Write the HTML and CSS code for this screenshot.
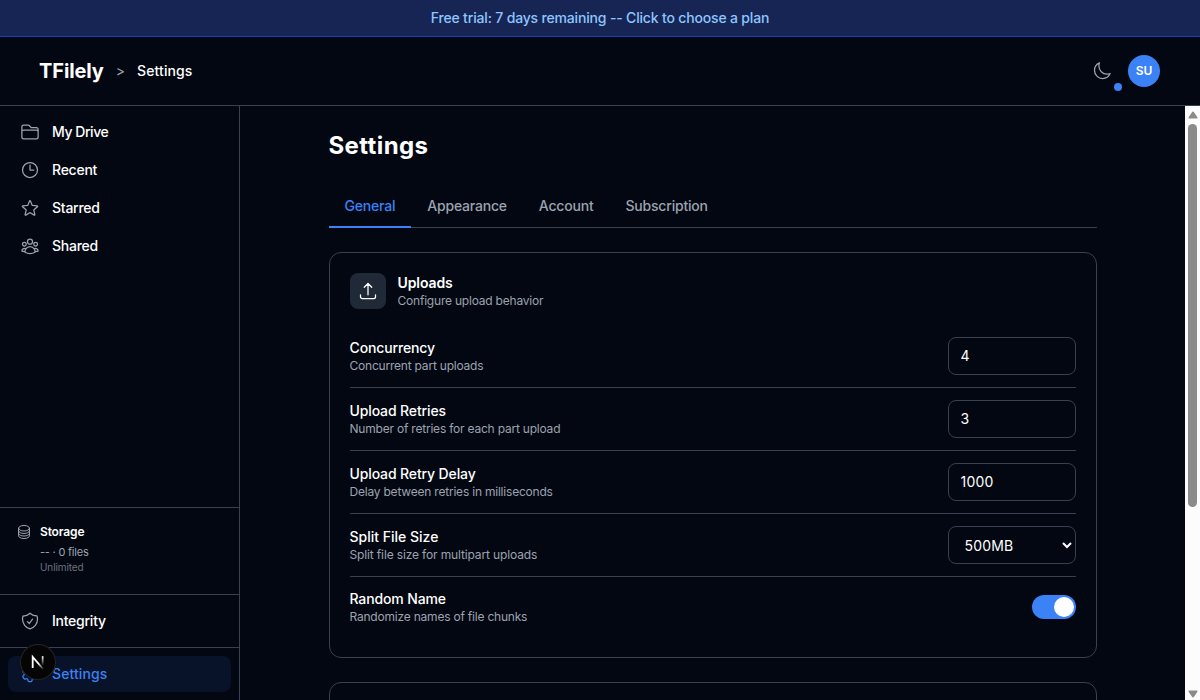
FILE: index.html
```html
<!DOCTYPE html>
<html lang="en">
<head>
  <meta charset="UTF-8">
  <meta name="viewport" content="width=device-width, initial-scale=1.0">
  <title>Settings - TFilely</title>
  <link rel="stylesheet" href="styles.css">
</head>
<body>

  <a class="trial-banner" href="#">Free trial: 7 days remaining -- Click to choose a plan</a>

  <header class="header">
    <div class="breadcrumb">
      <span class="brand">TFilely</span>
      <span class="separator">&gt;</span>
      <span class="current">Settings</span>
    </div>
    <div class="header-actions">
      <button class="theme-button" aria-label="Theme">
        <svg class="icon" viewBox="0 0 24 24"><path d="M21.752 15.002A9.72 9.72 0 0 1 18 15.75c-5.385 0-9.75-4.365-9.75-9.75 0-1.33.266-2.597.748-3.752A9.753 9.753 0 0 0 3 11.25C3 16.635 7.365 21 12.75 21a9.753 9.753 0 0 0 9.002-5.998Z"/></svg>
        <span class="theme-dot"></span>
      </button>
      <div class="avatar">SU</div>
    </div>
  </header>

  <div class="layout">
    <aside class="sidebar">
      <nav class="nav nav-main">
        <a class="nav-item" href="#">
          <svg class="icon" viewBox="0 0 24 24"><path d="M2.25 12.75V12A2.25 2.25 0 0 1 4.5 9.75h15A2.25 2.25 0 0 1 21.75 12v.75m-8.69-6.44-2.12-2.12a1.5 1.5 0 0 0-1.061-.44H4.5A2.25 2.25 0 0 0 2.25 6v12a2.25 2.25 0 0 0 2.25 2.25h15A2.25 2.25 0 0 0 21.75 18V9a2.25 2.25 0 0 0-2.25-2.25h-5.379a1.5 1.5 0 0 1-1.06-.44Z"/></svg>
          <span class="tight">My Drive</span>
        </a>
        <a class="nav-item" href="#">
          <svg class="icon" viewBox="0 0 24 24"><path d="M12 6v6h4.5m4.5 0a9 9 0 1 1-18 0 9 9 0 0 1 18 0Z"/></svg>
          <span>Recent</span>
        </a>
        <a class="nav-item" href="#">
          <svg class="icon" viewBox="0 0 24 24"><path d="M11.48 3.499a.562.562 0 0 1 1.04 0l2.125 5.111a.563.563 0 0 0 .475.345l5.518.442c.499.04.701.663.321.988l-4.204 3.602a.563.563 0 0 0-.182.557l1.285 5.385a.562.562 0 0 1-.84.61l-4.725-2.885a.562.562 0 0 0-.586 0L6.982 20.54a.562.562 0 0 1-.84-.61l1.285-5.386a.562.562 0 0 0-.182-.557l-4.204-3.602a.562.562 0 0 1 .321-.988l5.518-.442a.563.563 0 0 0 .475-.345L11.48 3.5Z"/></svg>
          <span>Starred</span>
        </a>
        <a class="nav-item" href="#">
          <svg class="icon" viewBox="0 0 24 24"><path d="M18 18.72a9.094 9.094 0 0 0 3.741-.479 3 3 0 0 0-4.682-2.72m.94 3.198.001.031c0 .225-.012.447-.037.666A11.944 11.944 0 0 1 12 21c-2.17 0-4.207-.576-5.963-1.584A6.062 6.062 0 0 1 6 18.719m12 0a5.971 5.971 0 0 0-.941-3.197m0 0A5.995 5.995 0 0 0 12 12.75a5.995 5.995 0 0 0-5.058 2.772m0 0a3 3 0 0 0-4.681 2.72 8.986 8.986 0 0 0 3.74.477m.94-3.197a5.971 5.971 0 0 0-.94 3.197M15 6.75a3 3 0 1 1-6 0 3 3 0 0 1 6 0Zm6 3a2.25 2.25 0 1 1-4.5 0 2.25 2.25 0 0 1 4.5 0Zm-13.5 0a2.25 2.25 0 1 1-4.5 0 2.25 2.25 0 0 1 4.5 0Z"/></svg>
          <span>Shared</span>
        </a>
      </nav>

      <div class="storage">
        <svg class="icon icon-small" viewBox="0 0 24 24"><path d="M20.25 6.375c0 2.278-3.694 4.125-8.25 4.125S3.75 8.653 3.75 6.375m16.5 0c0-2.278-3.694-4.125-8.25-4.125S3.75 4.097 3.75 6.375m16.5 0v11.25c0 2.278-3.694 4.125-8.25 4.125s-8.25-1.847-8.25-4.125V6.375m16.5 0v3.75m-16.5-3.75v3.75m16.5 0v3.75C20.25 16.153 16.556 18 12 18s-8.25-1.847-8.25-4.125v-3.75m16.5 0c0 2.278-3.694 4.125-8.25 4.125s-8.25-1.847-8.25-4.125"/></svg>
        <div>
          <div class="storage-title">Storage</div>
          <div class="storage-files">-- · 0 files</div>
          <div class="storage-limit">Unlimited</div>
        </div>
      </div>

      <nav class="nav nav-bottom">
        <a class="nav-item" href="#">
          <svg class="icon" viewBox="0 0 24 24"><path d="M9 12.75 11.25 15 15 9.75m-3-7.036A11.959 11.959 0 0 1 3.598 6 11.99 11.99 0 0 0 3 9.749c0 5.592 3.824 10.29 9 11.623 5.176-1.332 9-6.03 9-11.622 0-1.31-.21-2.571-.598-3.751h-.152c-3.196 0-6.1-1.248-8.25-3.285Z"/></svg>
          <span>Integrity</span>
        </a>
      </nav>

      <nav class="nav nav-bottom">
        <a class="nav-item active" href="#">
          <svg class="icon" viewBox="0 0 24 24"><path d="M9.594 3.94c.09-.542.56-.94 1.11-.94h2.593c.55 0 1.02.398 1.11.94l.213 1.281c.063.374.313.686.645.87.074.04.147.083.22.127.325.196.72.257 1.075.124l1.217-.456a1.125 1.125 0 0 1 1.37.49l1.296 2.247a1.125 1.125 0 0 1-.26 1.431l-1.003.827c-.293.241-.438.613-.43.992a7.723 7.723 0 0 1 0 .255c-.008.378.137.75.43.991l1.004.827c.424.35.534.955.26 1.43l-1.298 2.247a1.125 1.125 0 0 1-1.369.491l-1.217-.456c-.355-.133-.75-.072-1.076.124a6.47 6.47 0 0 1-.22.128c-.331.183-.581.495-.644.869l-.213 1.281c-.09.543-.56.94-1.11.94h-2.594c-.55 0-1.019-.398-1.11-.94l-.213-1.281c-.062-.374-.312-.686-.644-.87a6.52 6.52 0 0 1-.22-.127c-.325-.196-.72-.257-1.076-.124l-1.217.456a1.125 1.125 0 0 1-1.369-.49l-1.297-2.247a1.125 1.125 0 0 1 .26-1.431l1.004-.827c.292-.24.437-.613.43-.991a6.932 6.932 0 0 1 0-.255c.007-.38-.138-.751-.43-.992l-1.004-.827a1.125 1.125 0 0 1-.26-1.43l1.297-2.247a1.125 1.125 0 0 1 1.37-.491l1.216.456c.356.133.751.072 1.076-.124.072-.044.146-.086.22-.128.332-.183.582-.495.644-.869l.214-1.28Z M15 12a3 3 0 1 1-6 0 3 3 0 0 1 6 0Z"/></svg>
          <span>Settings</span>
        </a>
      </nav>
    </aside>

    <main class="main">
      <div class="content">
        <h1 class="page-title">Settings</h1>

        <div class="tabs">
          <button class="tab active">General</button>
          <button class="tab">Appearance</button>
          <button class="tab">Account</button>
          <button class="tab">Subscription</button>
        </div>

        <section class="card">
          <div class="card-header">
            <div class="card-icon">
              <svg class="icon" viewBox="0 0 24 24"><path d="M3 16.5v2.25A2.25 2.25 0 0 0 5.25 21h13.5A2.25 2.25 0 0 0 21 18.75V16.5m-13.5-9L12 3m0 0 4.5 4.5M12 3v13.5"/></svg>
            </div>
            <div>
              <h2 class="card-title">Uploads</h2>
              <p class="description">Configure upload behavior</p>
            </div>
          </div>

          <div class="row">
            <div>
              <div class="label">Concurrency</div>
              <p class="description">Concurrent part uploads</p>
            </div>
            <input class="field" type="number" value="4">
          </div>
          <div class="row">
            <div>
              <div class="label">Upload Retries</div>
              <p class="description">Number of retries for each part upload</p>
            </div>
            <input class="field" type="number" value="3">
          </div>
          <div class="row">
            <div>
              <div class="label">Upload Retry Delay</div>
              <p class="description">Delay between retries in milliseconds</p>
            </div>
            <input class="field" type="number" value="1000">
          </div>
          <div class="row">
            <div>
              <div class="label label-wide">Split File Size</div>
              <p class="description description-wide">Split file size for multipart uploads</p>
            </div>
            <select class="field">
              <option>500MB</option>
            </select>
          </div>
          <div class="row">
            <div>
              <div class="label">Random Name</div>
              <p class="description">Randomize names of file chunks</p>
            </div>
            <button class="toggle" aria-label="Random Name"><span class="toggle-knob"></span></button>
          </div>
        </section>

        <section class="card card-next"></section>
      </div>
    </main>

    <div class="scrollbar">
      <svg class="scroll-arrow" viewBox="0 0 10 8"><path d="M5 0.5Q5.6 0.5 6 1.2L9.4 6.2Q9.8 7.5 8.6 7.5H1.4Q.2 7.5 .6 6.2L4 1.2Q4.4 .5 5 .5Z"/></svg>
      <div class="scroll-thumb"></div>
      <svg class="scroll-arrow scroll-down" viewBox="0 0 10 8"><path d="M5 0.5Q5.6 0.5 6 1.2L9.4 6.2Q9.8 7.5 8.6 7.5H1.4Q.2 7.5 .6 6.2L4 1.2Q4.4 .5 5 .5Z"/></svg>
    </div>
  </div>

  <!-- dev tools badge -->
  <div class="dev-badge">
    <svg viewBox="0 0 36 36">
      <defs>
        <linearGradient id="fade" x1="0" y1="0" x2="0" y2="1">
          <stop offset="0" stop-color="#fff"/>
          <stop offset="1" stop-color="#fff" stop-opacity="0"/>
        </linearGradient>
        <linearGradient id="fadeEnd" gradientUnits="userSpaceOnUse" x1="19" y1="19" x2="24" y2="25">
          <stop offset="0" stop-color="#fff"/>
          <stop offset="1" stop-color="#fff" stop-opacity="0"/>
        </linearGradient>
      </defs>
      <path d="M12.7 24V13L23.5 25.5" fill="none" stroke="url(#fadeEnd)" stroke-width="1.8"/>
      <rect x="21.8" y="12.2" width="1.7" height="9.5" fill="url(#fade)"/>
    </svg>
  </div>

</body>
</html>
```
FILE: styles.css
```css
* {
  box-sizing: border-box;
}
body {
  font-family: Inter, "Liberation Sans", sans-serif;
  font-size: 14px;
  line-height: 20px;
  margin: 0;
  height: 100vh;
  display: flex;
  flex-direction: column;
  overflow: hidden;
  background: #030712;
  color: #fff;
}
h1, h2, p {
  margin: 0;
}
a {
  color: inherit;
  text-decoration: none;
}
button {
  font: inherit;
  border: 0;
  padding: 0;
  background: none;
  cursor: pointer;
}
.icon {
  width: 20px;
  height: 20px;
  flex-shrink: 0;
  fill: none;
  stroke: #9ca3af;
  stroke-width: 1.5;
  stroke-linecap: round;
  stroke-linejoin: round;
}
.icon-small {
  width: 16px;
  height: 16px;
}

.trial-banner {
  flex-shrink: 0;
  height: 37px;
  padding: 8px 16px;
  border-bottom: 1px solid #193cb8;
  background: #172554;
  color: #8ec5ff;
  font-weight: 500;
  letter-spacing: -0.17px;
  text-align: center;
}

.header {
  flex-shrink: 0;
  height: 69px;
  padding: 0 40px;
  display: flex;
  align-items: center;
  justify-content: space-between;
  border-bottom: 1px solid #374151;
}
.breadcrumb {
  display: flex;
  align-items: center;
  gap: 12px;
}
.brand {
  margin-left: -1px;
  font-size: 20px;
  font-weight: 700;
  letter-spacing: -0.1px;
}
.separator {
  color: #9ca3af;
}
.current {
  font-weight: 500;
  letter-spacing: 0.1px;
}
.header-actions {
  display: flex;
  align-items: center;
  gap: 8px;
}
.theme-button {
  position: relative;
  width: 36px;
  height: 36px;
  display: flex;
  align-items: center;
  justify-content: center;
}
.theme-dot {
  position: absolute;
  right: -2px;
  bottom: -2px;
  width: 8px;
  height: 8px;
  border-radius: 50%;
  background: #3b82f6;
}
.avatar {
  width: 32px;
  height: 32px;
  border-radius: 50%;
  background: #3b82f6;
  font-size: 12px;
  font-weight: 600;
  line-height: 32px;
  text-align: center;
}

.layout {
  flex: 1;
  min-height: 0;
  display: flex;
}
.sidebar {
  width: 240px;
  display: flex;
  flex-direction: column;
  border-right: 1px solid #374151;
}
.nav {
  padding: 8px;
  display: flex;
  flex-direction: column;
  gap: 2px;
}
.nav-main {
  flex: 1;
}
.nav-bottom {
  border-top: 1px solid #374151;
}
.nav-item {
  height: 36px;
  padding: 0 12px;
  display: flex;
  align-items: center;
  gap: 12px;
  border-radius: 8px;
  font-weight: 500;
  letter-spacing: -0.25px;
}
.nav-item .tight {
  letter-spacing: -0.45px;
}
.nav-item.active {
  background: #081228;
  color: #3b82f6;
  letter-spacing: 0.1px;
}
.nav-item.active .icon {
  stroke: #3b82f6;
}
.storage {
  height: 87px;
  padding: 16px;
  display: flex;
  gap: 8px;
  border-top: 1px solid #374151;
  font-size: 12px;
  line-height: 16px;
}
.storage-title {
  font-weight: 600;
  letter-spacing: -0.15px;
}
.storage-files {
  margin-top: 4px;
  color: #9ca3af;
  font-size: 11px;
  letter-spacing: -0.22px;
}
.storage-limit {
  color: #6b7280;
  font-size: 10px;
  line-height: 15px;
  letter-spacing: -0.1px;
}

.main {
  flex: 1;
  padding: 24px 0;
  overflow: hidden;
}
.content {
  width: 768px;
  margin: 0 auto;
}
.page-title {
  font-size: 24px;
  font-weight: 700;
  line-height: 32px;
  letter-spacing: 0.38px;
}
.tabs {
  margin: 24px 0;
  height: 42px;
  display: flex;
  border-bottom: 1px solid #374151;
}
.tab {
  height: 42px;
  padding: 10px 16px;
  border-bottom: 2px solid transparent;
  color: #9ca3af;
  font-weight: 500;
  line-height: 20px;
  letter-spacing: -0.2px;
}
.tab.active {
  border-color: #3b82f6;
  color: #3b82f6;
}

.card {
  padding: 20px;
  border: 1px solid #374151;
  border-radius: 12px;
}
.card-next {
  margin-top: 24px;
  height: 200px;
}
.card-header {
  margin-bottom: 16px;
  display: flex;
  align-items: center;
  gap: 12px;
}
.card-icon {
  width: 36px;
  height: 36px;
  display: flex;
  align-items: center;
  justify-content: center;
  border-radius: 8px;
  background: #1f2937;
}
.card-icon .icon {
  stroke: #fff;
}
.card-title {
  font-size: 14px;
  font-weight: 600;
  letter-spacing: -0.1px;
}
.label {
  font-weight: 500;
  letter-spacing: -0.13px;
}
.label-wide {
  letter-spacing: 0;
}
.description {
  color: #9ca3af;
  font-size: 12px;
  line-height: 16px;
  letter-spacing: -0.21px;
}
.description-wide {
  letter-spacing: -0.14px;
}
.row {
  padding: 12px 0;
  display: flex;
  align-items: center;
  justify-content: space-between;
  border-bottom: 1px solid #374151;
}
.row:last-child {
  border-bottom: 0;
}
.field {
  width: 128px;
  height: 38px;
  padding: 7px 12px 9px;
  border: 1px solid #374151;
  border-radius: 8px;
  background: #030712;
  color: #fff;
  font: inherit;
  letter-spacing: 0.2px;
}
select.field {
  padding: 8px 0 8px 12px;
}
.toggle {
  width: 44px;
  height: 24px;
  padding: 2px;
  display: flex;
  justify-content: flex-end;
  border-radius: 12px;
  background: #3b82f6;
}
.toggle-knob {
  width: 20px;
  height: 20px;
  border-radius: 50%;
  background: #fff;
}

.scrollbar {
  width: 15px;
  padding: 5px 0 2px;
  display: flex;
  flex-direction: column;
  align-items: center;
  background: #fcfcfc;
}
.scroll-arrow {
  width: 10px;
  height: 8px;
  fill: #8b8b8b;
}
.scroll-down {
  margin-top: auto;
  transform: rotate(180deg);
}
.scroll-thumb {
  width: 9px;
  height: 383px;
  margin-top: 5px;
  border-radius: 5px;
  background: #8b8b8b;
}

.dev-badge {
  position: fixed;
  left: 20px;
  bottom: 20px;
  width: 36px;
  height: 36px;
  border-radius: 50%;
  background: #050505;
  box-shadow: inset 0 0 0 1px #262626;
}
.dev-badge svg {
  display: block;
}
```
